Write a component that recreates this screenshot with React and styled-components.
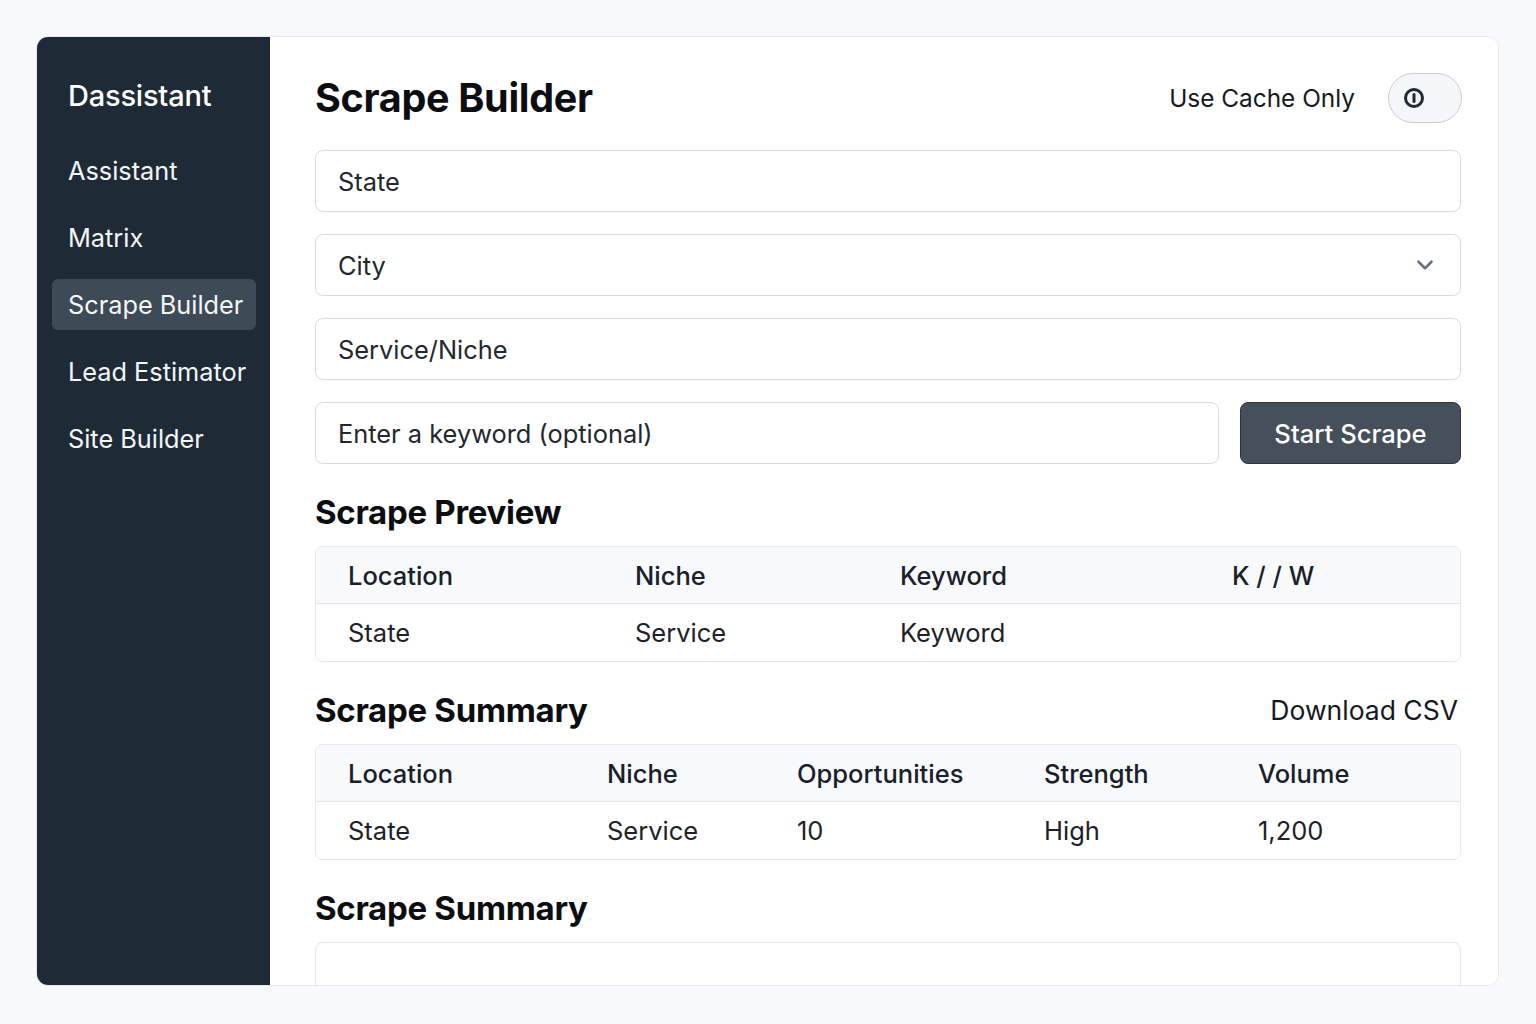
import React from "react";
import styled, { createGlobalStyle } from "styled-components";
import { ChevronDown } from "lucide-react";

const GlobalStyle = createGlobalStyle`
  * { box-sizing: border-box; }
  body {
    margin: 0;
    background: #f8f9fb;
    font-family: Inter, "Noto Sans", "Liberation Sans", sans-serif;
    color: #1d232b;
  }
`;

const navItems = ["Assistant", "Matrix", "Scrape Builder", "Lead Estimator", "Site Builder"];

const previewCols = ["Location", "Niche", "Keyword", "K / / W"];
const previewRows = [["State", "Service", "Keyword", ""]];

const summaryCols = ["Location", "Niche", "Opportunities", "Strength", "Volume"];
const summaryRows = [["State", "Service", "10", "High", "1,200"]];

const PowerIcon = () => (
  <svg width="24" height="24" viewBox="0 0 24 24" fill="none">
    <circle cx="12" cy="12" r="8.5" stroke="#1e2b37" strokeWidth="3" />
    <line x1="12" y1="8.5" x2="12" y2="15.5" stroke="#1e2b37" strokeWidth="3" strokeLinecap="round" />
  </svg>
);

const DataTable = ({ cols, rows, template }) => (
  <Table>
    <HeadRow $cols={template}>
      {cols.map((c) => (
        <HeadCell key={c}>{c}</HeadCell>
      ))}
    </HeadRow>
    {rows.map((r, i) => (
      <BodyRow key={i} $cols={template}>
        {r.map((v, j) => (
          <Cell key={j}>{v}</Cell>
        ))}
      </BodyRow>
    ))}
  </Table>
);

const App = () => {
  return (
    <Page>
      <GlobalStyle />
      <Card>
        <Sidebar>
          <Brand>Dassistant</Brand>
          <Nav>
            {navItems.map((item) => (
              <NavItem key={item} $active={item === "Scrape Builder"}>
                {item}
              </NavItem>
            ))}
          </Nav>
        </Sidebar>
        <Main>
          <Header>
            <Title>Scrape Builder</Title>
            <CacheControl>
              <CacheLabel>Use Cache Only</CacheLabel>
              <Toggle>
                <PowerIcon />
              </Toggle>
            </CacheControl>
          </Header>

          <Form>
            <Field placeholder="State" />
            <SelectBox>
              <span>City</span>
              <ChevronDown size={26} strokeWidth={2.4} color="#6b7280" />
            </SelectBox>
            <Field placeholder="Service/Niche" />
            <KeywordRow>
              <Field placeholder="Enter a keyword (optional)" />
              <StartButton>Start Scrape</StartButton>
            </KeywordRow>
          </Form>

          <Section $top={28}>
            <SectionHeader>
              <SectionTitle>Scrape Preview</SectionTitle>
            </SectionHeader>
            <DataTable cols={previewCols} rows={previewRows} template="287px 265px 332px 1fr" />
          </Section>

          <Section $top={28}>
            <SectionHeader>
              <SectionTitle>Scrape Summary</SectionTitle>
              <DownloadLink>Download CSV</DownloadLink>
            </SectionHeader>
            <DataTable cols={summaryCols} rows={summaryRows} template="259px 190px 247px 214px 1fr" />
          </Section>

          <Section $top={28}>
            <SectionHeader>
              <SectionTitle>Scrape Summary</SectionTitle>
            </SectionHeader>
            <EmptyTable />
          </Section>
        </Main>
      </Card>
    </Page>
  );
};

export default App;

const Page = styled.div`
  padding: 36px 37px 0 36px;
`;

const Card = styled.div`
  display: flex;
  height: 950px;
  border: 1px solid #e6e8ec;
  border-radius: 12px;
  overflow: hidden;
  background: #ffffff;
`;

const Sidebar = styled.aside`
  width: 233px;
  flex-shrink: 0;
  background: #1e2b37;
  padding: 39px 14px 0 15px;
  display: flex;
  flex-direction: column;
`;

const Brand = styled.div`
  padding-left: 16px;
  height: 40px;
  line-height: 40px;
  font-size: 29px;
  font-weight: 500;
  color: #ffffff;
  letter-spacing: -0.2px;
`;

const Nav = styled.nav`
  margin-top: 29px;
  display: flex;
  flex-direction: column;
  gap: 16px;
`;

const NavItem = styled.div`
  height: 51px;
  display: flex;
  align-items: center;
  padding-left: 16px;
  border-radius: 6px;
  font-size: 25.3px;
  color: #f4f6f8;
  background: ${(p) => (p.$active ? "#3e4a56" : "transparent")};
`;

const Main = styled.main`
  flex: 1;
  padding: 36px 37px 0 45px;
  display: flex;
  flex-direction: column;
  overflow: hidden;
  background: #fefefe;
`;

const Header = styled.div`
  height: 50px;
  display: flex;
  align-items: center;
  justify-content: space-between;
`;

const Title = styled.h1`
  margin: 0;
  font-size: 39.5px;
  font-weight: 700;
  color: #0b0d10;
  letter-spacing: -0.3px;
`;

const CacheControl = styled.div`
  display: flex;
  align-items: center;
  gap: 33px;
  margin-right: -1px;
`;

const CacheLabel = styled.span`
  font-size: 24.4px;
  color: #15191e;
`;

const Toggle = styled.div`
  width: 74px;
  height: 50px;
  border-radius: 25px;
  border: 1px solid #c9cdd3;
  background: #f5f6f8;
  display: flex;
  align-items: center;
  padding-left: 13px;
`;

const Form = styled.div`
  margin-top: 27px;
  display: flex;
  flex-direction: column;
  gap: 22px;
`;

const Field = styled.input`
  width: 100%;
  height: 62px;
  border: 1px solid #d8dbe0;
  border-radius: 8px;
  background: #ffffff;
  padding: 0 22px;
  font-family: inherit;
  font-size: 25.4px;
  color: #22272e;
  outline: none;

  &::placeholder {
    color: #23282f;
  }
`;

const SelectBox = styled.div`
  height: 62px;
  border: 1px solid #d8dbe0;
  border-radius: 8px;
  background: #ffffff;
  padding: 0 22px 0 22px;
  display: flex;
  align-items: center;
  justify-content: space-between;
  font-size: 25.4px;
  color: #23282f;
`;

const KeywordRow = styled.div`
  display: flex;
  gap: 21px;

  ${Field} {
    flex: 1;
  }
`;

const StartButton = styled.button`
  width: 221px;
  height: 62px;
  flex-shrink: 0;
  border: 1px solid #2c363f;
  border-radius: 8px;
  background: #45505b;
  color: #ffffff;
  font-family: inherit;
  font-size: 25.6px;
  font-weight: 500;
`;

const Section = styled.section`
  margin-top: ${(p) => p.$top}px;
`;

const SectionHeader = styled.div`
  height: 40px;
  display: flex;
  align-items: center;
  justify-content: space-between;
  margin-bottom: 14px;
`;

const SectionTitle = styled.h2`
  margin: 0;
  font-size: 33px;
  font-weight: 700;
  color: #0b0d10;
  letter-spacing: -0.3px;
`;

const DownloadLink = styled.span`
  font-size: 26.5px;
  color: #15191e;
  margin-right: 3px;
`;

const Table = styled.div`
  border: 1px solid #e3e6ea;
  border-radius: 8px;
  overflow: hidden;
`;

const HeadRow = styled.div`
  display: grid;
  grid-template-columns: ${(p) => p.$cols};
  height: 57px;
  align-items: center;
  padding-left: 32px;
  background: #f8f9fb;
  border-bottom: 1px solid #e3e6ea;
`;

const BodyRow = styled(HeadRow)`
  background: #ffffff;
  border-bottom: none;
`;

const HeadCell = styled.div`
  font-size: 25.5px;
  font-weight: 500;
  color: #18202a;
`;

const Cell = styled.div`
  font-size: 25.5px;
  color: #1d2228;
`;

const EmptyTable = styled.div`
  height: 120px;
  border: 1px solid #e3e6ea;
  border-radius: 8px;
  background: #ffffff;
`;
